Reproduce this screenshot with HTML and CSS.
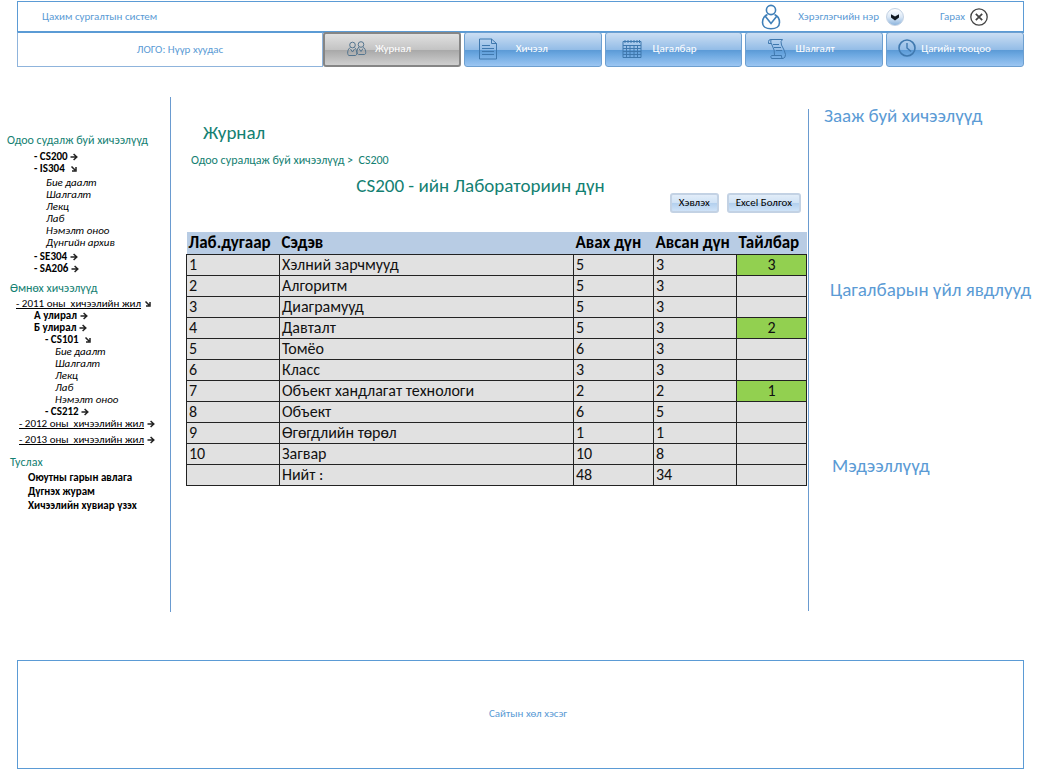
FILE: index.html
```html
<!DOCTYPE html>
<html lang="mn">
<head>
<meta charset="utf-8">
<title>Цахим сургалтын систем</title>
<link rel="stylesheet" href="styles.css">
</head>
<body>
<svg class="defs" aria-hidden="true">
  <symbol id="go" viewBox="0 0 8 8"><path d="M0.5 4H6.5M3.6 1L6.8 4L3.6 7" fill="none" stroke="#222" stroke-width="1.5"/></symbol>
  <symbol id="open" viewBox="0 0 8 8"><path d="M1.500 1.500L5 5M6 2V6H2" fill="none" stroke="#222" stroke-width="1.500"/></symbol>
</svg>
<header class="header">
  <div class="topbar">
    <span class="brand">Цахим сургалтын систем</span>
    <svg class="user-icon" viewBox="0 0 20 26" fill="none" stroke="#3f7fb8" stroke-width="1.6"><circle cx="10" cy="6" r="4.6"/><path d="M6.5 10.5C3 12 1.5 15 1.5 18.500C1.500 22.500 5 24.800 10 24.800S18.500 22.500 18.500 18.500C18.500 15 17 12 13.500 10.500M4.500 12.500L10 19.500L15.500 12.500"/></svg>
    <span class="user-name">Хэрэглэгчийн нэр</span>
    <button class="round" type="button" aria-label="Цэс"><svg viewBox="0 0 18 18"><path d="M4.500 6L9 8.500L13.500 6V9.500L9 13L4.500 9.500Z" fill="#101820"/></svg></button>
    <a class="logout" href="#">Гарах
      <svg viewBox="0 0 18 18" fill="none" stroke="#444"><circle cx="9" cy="9" r="8.200" stroke-width="1.300"/><path d="M5.800 5.800L12.200 12.200M12.200 5.800L5.800 12.200" stroke-width="1.700"/></svg></a>
  </div>
  <nav class="nav">
    <a class="logo" href="#">ЛОГО: Нүүр хуудас</a>
    <button class="tab tab-active" type="button"><svg viewBox="0 0 20 18"><circle cx="5.500" cy="5" r="2.800"/><circle cx="14" cy="4.500" r="2.800"/><path d="M3.500 7.500C0 9 0 15.500 2 15.500H8.500C10.500 15.500 10 9 7.500 7.500M12 7C9.500 8.500 9.500 14.500 11.500 14.500H17.500C19.500 14.500 19 8.500 16 7M3.500 9L5.500 12L7.500 9M12 8.500L14 11.500L16 8.500"/></svg>Журнал</button>
    <button class="tab tab-lesson" type="button"><svg viewBox="0 0 20 22"><path d="M1.500 1H13.500L18.500 5.500V21H1.500ZM13.500 1V5.500H18.500M4 7.500H12M4 10.500H16M4 13.500H16M4 16.500H16"/></svg>Хичээл</button>
    <button class="tab tab-calendar" type="button"><svg viewBox="0 0 20 20"><path d="M1 2.500H19V18.500H1ZM1 6.500H19M1 9.500H19M1 12.500H19M1 15.500H19M4.500 6.500V18.500M8 6.500V18.500M12 6.500V18.500M15.500 6.500V18.500M3 1V4M6 1V4M9 1V4M12 1V4M15 1V4M17.500 1V4"/></svg>Цагалбар</button>
    <button class="tab tab-exam" type="button"><svg viewBox="0 0 20 22"><path d="M4 5.500H1.500V3.500Q1.500 1.500 4 1.500H15.500Q13 3 14.500 7Q18 13 18.500 16.500Q18.500 20 16 20.500H4.500Q3 18.500 4.500 17.500H14.500Q14 20.500 16 20.500M4 1.500Q3 4 5 7Q8 12 7.500 17.500M6 6.500H12M7 9.500H14M9 12.500H15"/></svg>Шалгалт</button>
    <button class="tab tab-time" type="button"><svg viewBox="0 0 20 20"><circle cx="10" cy="9" r="8" stroke-width="1.600"/><path d="M10 4V9L14 12.500" stroke-width="1.400"/></svg>Цагийн тооцоо</button>
  </nav>
</header>

<div class="columns">
  <nav class="side">
    <h2>Одоо судалж буй хичээлүүд</h2>
    <ul class="current">
      <li><a href="#">- CS200 <svg><use href="#go"/></svg></a></li>
      <li><a href="#">- IS304 &nbsp;<svg><use href="#open"/></svg></a>
        <ul class="sub">
          <li><a href="#">Бие даалт</a></li>
          <li><a href="#">Шалгалт</a></li>
          <li><a href="#">Лекц</a></li>
          <li><a href="#">Лаб</a></li>
          <li><a href="#">Нэмэлт оноо</a></li>
          <li><a href="#">Дүнгийн архив</a></li>
        </ul></li>
      <li><a href="#">- SE304 <svg><use href="#go"/></svg></a></li>
      <li><a href="#">- SA206 <svg><use href="#go"/></svg></a></li>
    </ul>
    <h2 class="h-past">Өмнөх хичээлүүд</h2>
    <ul class="years">
      <li><a class="year" href="#"><u>- 2011 оны &nbsp;хичээлийн жил</u> <svg><use href="#open"/></svg></a>
        <ul class="terms">
          <li><a href="#">А улирал <svg><use href="#go"/></svg></a></li>
          <li><a href="#">Б улирал <svg><use href="#go"/></svg></a>
            <ul class="term-list">
              <li><a href="#">- CS101 &nbsp;<svg><use href="#open"/></svg></a>
                <ul class="sub">
                  <li><a href="#">Бие даалт</a></li>
                  <li><a href="#">Шалгалт</a></li>
                  <li><a href="#">Лекц</a></li>
                  <li><a href="#">Лаб</a></li>
                  <li><a href="#">Нэмэлт оноо</a></li>
                </ul></li>
              <li><a href="#">- CS212 <svg><use href="#go"/></svg></a></li>
            </ul></li>
        </ul></li>
      <li class="older"><a class="year" href="#"><u>- 2012 оны &nbsp;хичээлийн жил</u> <svg><use href="#go"/></svg></a></li>
      <li class="older"><a class="year" href="#"><u>- 2013 оны &nbsp;хичээлийн жил</u> <svg><use href="#go"/></svg></a></li>
    </ul>
    <h2 class="h-help">Туслах</h2>
    <ul class="help">
      <li><a href="#">Оюутны гарын авлага</a></li>
      <li><a href="#">Дүгнэх журам</a></li>
      <li><a href="#">Хичээлийн хувиар үзэх</a></li>
    </ul>
  </nav>

  <main class="main">
    <h1>Журнал</h1>
    <p class="crumbs"><a href="#">Одоо суралцаж буй хичээлүүд</a> &gt;&nbsp; <a href="#">CS200</a></p>
    <h2>CS200 - ийн Лабораториин дүн</h2>
    <div class="actions">
      <button type="button">Хэвлэх</button>
      <button type="button">Excel Болгох</button>
    </div>
    <table class="grades">
      <colgroup><col class="c-num"><col><col class="c-max"><col class="c-got"><col class="c-note"></colgroup>
      <thead><tr><th>Лаб.дугаар</th><th>Сэдэв</th><th>Авах дүн</th><th>Авсан дүн</th><th>Тайлбар</th></tr></thead>
      <tbody>
        <tr><td>1</td><td>Хэлний зарчмууд</td><td>5</td><td>3</td><td class="mark">3</td></tr>
        <tr><td>2</td><td>Алгоритм</td><td>5</td><td>3</td><td></td></tr>
        <tr><td>3</td><td>Диаграмууд</td><td>5</td><td>3</td><td></td></tr>
        <tr><td>4</td><td>Давталт</td><td>5</td><td>3</td><td class="mark">2</td></tr>
        <tr><td>5</td><td>Томёо</td><td>6</td><td>3</td><td></td></tr>
        <tr><td>6</td><td>Класс</td><td>3</td><td>3</td><td></td></tr>
        <tr><td>7</td><td>Объект хандлагат технологи</td><td>2</td><td>2</td><td class="mark">1</td></tr>
        <tr><td>8</td><td>Объект</td><td>6</td><td>5</td><td></td></tr>
        <tr><td>9</td><td>Өгөгдлийн төрөл</td><td>1</td><td>1</td><td></td></tr>
        <tr><td>10</td><td>Загвар</td><td>10</td><td>8</td><td></td></tr>
        <tr><td></td><td>Нийт :</td><td>48</td><td>34</td><td></td></tr>
      </tbody>
    </table>
  </main>

  <aside class="aside">
    <h2 class="teach">Зааж буй хичээлүүд</h2>
    <h2 class="events">Цагалбарын үйл явдлууд</h2>
    <h2 class="news">Мэдээллүүд</h2>
  </aside>
</div>

<footer class="footer">Сайтын хөл хэсэг</footer>
</body>
</html>
```

FILE: styles.css
```css
* { box-sizing: border-box; }
body, h1, h2, p, ul { margin: 0; padding: 0; }
body { font-family: Carlito, Lato, "Open Sans", sans-serif; font-size: 11px; line-height: 12px; color: #000; background: #fff; }
ul { list-style: none; }
a { color: inherit; text-decoration: none; }
h1, h2 { font-weight: normal; }
button { font-family: inherit; cursor: pointer; }
.defs { display: none; }

.header { margin: 1px 14px 0 17px; color: #5b9bd5; }
.topbar { display: flex; align-items: center; height: 31px; border: 1px solid #5b9bd5; padding: 0 35px 0 24px; }
.brand { margin-right: auto; }
.user-icon { width: 20px; height: 26px; }
.user-name { margin-left: 17px; }
.round { width: 18px; height: 18px; margin-left: 7px; padding: 0; border: 1px solid #c3d2e4; border-radius: 50%; background: linear-gradient(#fff, #dbe8f6 50%, #8db5de); }
.round svg { display: block; width: 16px; height: 16px; }
.logout { display: flex; align-items: center; gap: 5px; margin-left: 36px; }
.logout svg { width: 18px; height: 18px; }

.nav { display: grid; grid-template-columns: 303px repeat(5, 1fr); column-gap: 3px; height: 35px; background: linear-gradient(#5b9bd5, #5b9bd5) top / 100% 1px no-repeat; }
.logo { display: flex; align-items: center; justify-content: center; margin-right: -3px; padding-left: 20px; border: 1px solid #8fb4dc; border-top-color: #5b9bd5; }
.tab { display: flex; align-items: center; padding: 0 0 2px 13px; border: 1px solid #6d9fd0; border-radius: 3px; font-size: 11px; line-height: 12px; color: #fff; background: linear-gradient(#cbdef3, #94bde7 50%, #5b9ad6 52%, #6ba7e0 65%, #9cc6f2); }
.tab svg { flex: none; width: 20px; height: 22px; fill: none; stroke: #3f78ae; stroke-width: 1; }
.tab-active { padding-left: 22px; border: 2px solid #858585; gap: 8px; background: linear-gradient(#e0e0e0, #c4c4c4 50%, #a8a8a8 52%, #cfcfcf); }
.tab-active svg { stroke: #54758f; }
.tab-lesson { gap: 18px; }
.tab-calendar { padding-left: 16px; gap: 11px; }
.tab-exam { padding-left: 21px; gap: 8px; }
.tab-time { padding-left: 10px; gap: 4px; }

.columns { display: grid; grid-template-columns: 171px 1fr 230px; margin-top: 30px; }
.side { height: 515px; padding-top: 36px; border-right: 1px solid #6a9bd0; }
.side h2 { padding-left: 7px; font-size: 12px; line-height: 14px; color: #138072; }
.side svg { width: 8px; height: 8px; vertical-align: -1px; }
.side li { font-weight: bold; white-space: nowrap; }
.side a { display: block; }
.side .year { font-weight: normal; }
.side .sub li { font-weight: normal; font-style: italic; }
.current { padding: 4px 0 0 34px; }
.current .sub { padding: 2px 0 2px 12px; }
.side .h-past, .side .h-help { padding-left: 10px; }
.h-past { margin-top: 6px; }
.years { padding: 3px 0 0 16px; }
.terms { padding-left: 18px; }
.term-list { padding-left: 11px; }
.term-list .sub { padding-left: 10px; }
.older { padding-left: 3px; }
.older + .older { margin-top: 4px; }
.h-help { margin-top: 9px; }
.help { display: grid; gap: 2px; padding: 3px 0 0 28px; }

.main { padding: 26px 1px 0 15px; color: #138072; }
.main h1 { padding-left: 17px; font-size: 19px; line-height: 20px; }
.crumbs { margin-top: 10px; padding-left: 5px; font-size: 12px; line-height: 14px; }
.main h2 { margin-top: 8px; padding-right: 32px; text-align: center; font-size: 19px; line-height: 22px; }
.actions { display: flex; justify-content: flex-end; gap: 8px; margin-top: -4px; padding-right: 6px; }
.actions button { height: 20px; padding: 0 7px; border: 2px solid #c3d2e4; border-radius: 3px; font-size: 11px; line-height: 12px; color: #000; background: linear-gradient(#e2edf9, #cfe2f5 50%, #b3d0ee 52%, #cfe3f8); }
.grades { width: 100%; margin-top: 19px; border-collapse: collapse; table-layout: fixed; font-size: 16px; line-height: 18px; color: #111; }
.grades th, .grades td { height: 21px; padding: 1px 2px; text-align: left; white-space: nowrap; }
.grades th { height: 22px; font-size: 17px; padding-top: 2px; background: #b8cce4; color: #000; }
.grades td { border: 1px solid #222; background: #e1e1e1; }
.grades .mark { text-align: center; background: #92d050; }
.c-num { width: 93px; }
.c-max { width: 80px; }
.c-got { width: 83px; }
.c-note { width: 70px; }

.aside { height: 502px; margin-top: 12px; border-left: 1px solid #6a9bd0; color: #5b9bd5; }
.aside h2 { font-size: 19px; line-height: 20px; white-space: nowrap; }
.teach { margin: -3px 0 0 15px; }
.events { margin: 154px 0 0 21px; }
.news { margin: 156px 0 0 23px; }

.footer { display: flex; align-items: center; justify-content: center; height: 109px; margin: 48px 14px 0 17px; padding: 0 0 2px 15px; border: 1px solid #5b9bd5; color: #5b9bd5; }
```
